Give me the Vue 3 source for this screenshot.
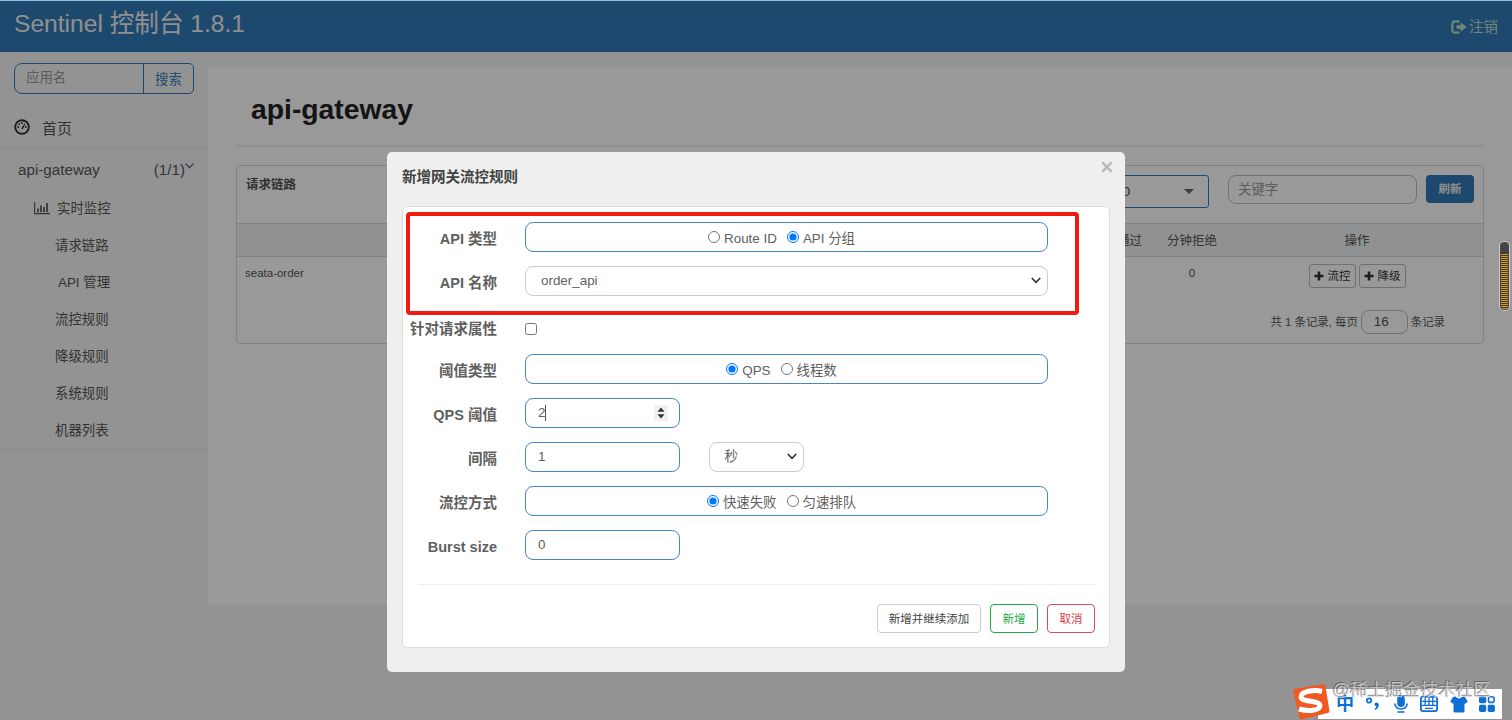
<template>
  <div class="page">
    <header class="navbar">
      <span class="brand">Sentinel 控制台 1.8.1</span>
      <a class="logout">
        <svg width="16" height="14" viewBox="0 0 16 14">
          <path d="M8.5 1.3H4Q1.3 1.3 1.3 4v6q0 2.7 2.7 2.7h4.5" fill="none" stroke="currentColor" stroke-width="2.2" />
          <path d="M5.5 5.2h4.2V2.3L15.6 7l-5.9 4.7V8.8H5.5z" fill="currentColor" />
        </svg>
        注销
      </a>
    </header>

    <div class="wrapper">
      <aside class="sidebar">
        <div class="search">
          <span class="search-input">应用名</span>
          <span class="search-btn">搜索</span>
        </div>
        <div class="home">
          <svg width="16" height="16" viewBox="0 0 16 16">
            <circle cx="8" cy="8" r="6.8" fill="none" stroke="currentColor" stroke-width="1.9" />
            <circle cx="4.2" cy="8" r=".9" fill="currentColor" />
            <circle cx="5.3" cy="5.2" r=".9" fill="currentColor" />
            <circle cx="8" cy="4" r=".9" fill="currentColor" />
            <circle cx="11.8" cy="8" r=".9" fill="currentColor" />
            <path d="M7.3 9.5l3.2-5 .8.5-2.4 5.2z" fill="currentColor" />
          </svg>
          <span>首页</span>
        </div>
        <div class="app">
          <span>api-gateway</span>
          <span class="count">(1/1)<svg width="9" height="6" viewBox="0 0 9 6"><path d="M.5 .7l4 4 4-4" fill="none" stroke="currentColor" stroke-width="1.2" /></svg></span>
        </div>
        <ul class="menu">
          <li v-for="item in menu" :key="item" :class="{ first: item === '实时监控', api: item === 'API 管理' }">
            <svg v-if="item === '实时监控'" width="16" height="13" viewBox="0 0 16 13">
              <path d="M.6 0v11.6H16" fill="none" stroke="currentColor" stroke-width="1.1" />
              <path d="M4 6.5v3.8M7 3.5v6.8M10 5v5.3M13 1v9.3" stroke="currentColor" stroke-width="1.7" />
            </svg>
            <span>{{ item }}</span>
          </li>
        </ul>
      </aside>

      <main class="content">
        <h1>api-gateway</h1>
        <section class="card">
          <div class="card-head">
            <span class="card-title">请求链路</span>
            <div class="machine">
              <span>192.168.1.7:8720</span>
              <i class="caret"></i>
            </div>
            <span class="keyword">关键字</span>
            <span class="refresh">刷新</span>
          </div>
          <div class="thead">
            <span class="col-pass">通过</span>
            <span class="col-block">分钟拒绝</span>
            <span class="col-op">操作</span>
          </div>
          <div class="trow">
            <span class="resource">seata-order</span>
            <span class="col-block">0</span>
            <div class="col-op">
              <span v-for="op in ['流控', '降级']" :key="op" class="op">
                <svg width="10" height="10" viewBox="0 0 10 10"><path d="M5 .5v9M.5 5h9" stroke="currentColor" stroke-width="2.6" /></svg>
                {{ op }}
              </span>
            </div>
          </div>
          <div class="pager">
            <span>共 1 条记录, 每页</span>
            <span class="size">16</span>
            <span>条记录</span>
          </div>
        </section>
      </main>
    </div>

    <div class="overlay"></div>
    <div class="topline"></div>

    <div class="dialog">
      <div class="dialog-head">
        <span>新增网关流控规则</span>
        <svg class="close" width="12" height="12" viewBox="0 0 12 12"><path d="M1.4 1.4l9.2 9.2M10.6 1.4l-9.2 9.2" stroke="#b5b5b5" stroke-width="2.3" /></svg>
      </div>
      <div class="panel">
        <div class="form">
          <div class="row">
            <label>API 类型</label>
            <div class="box wide radios">
              <input type="radio" name="mode" value="route" v-model="form.mode" /><span>Route ID</span>
              <input type="radio" name="mode" value="group" v-model="form.mode" /><span>API 分组</span>
            </div>
          </div>
          <div class="row">
            <label>API 名称</label>
            <div class="box wide select">
              <span>order_api</span>
              <svg width="10" height="7" viewBox="0 0 10 7"><path d="M.8 1l4.2 4.3L9.2 1" fill="none" stroke="#333" stroke-width="1.7" /></svg>
            </div>
          </div>
          <div class="row check">
            <label>针对请求属性</label>
            <input type="checkbox" v-model="form.attr" />
          </div>
          <div class="row">
            <label>阈值类型</label>
            <div class="box wide radios">
              <input type="radio" name="grade" value="qps" v-model="form.grade" /><span>QPS</span>
              <input type="radio" name="grade" value="thread" v-model="form.grade" /><span>线程数</span>
            </div>
          </div>
          <div class="row">
            <label>QPS 阈值</label>
            <div class="box number">
              <span class="focused">2</span>
              <svg class="spin" width="14" height="16" viewBox="0 0 14 16">
                <rect width="14" height="16" fill="#f1f1f1" />
                <path d="M7 2.500l3.600 4.200H3.400zM7 13.500l3.600-4.200H3.400z" fill="#333" />
              </svg>
            </div>
          </div>
          <div class="row">
            <label>间隔</label>
            <div class="box number">1</div>
            <div class="box select unit">
              <span>秒</span>
              <svg width="10" height="7" viewBox="0 0 10 7"><path d="M.8 1l4.2 4.3L9.2 1" fill="none" stroke="#333" stroke-width="1.7" /></svg>
            </div>
          </div>
          <div class="row">
            <label>流控方式</label>
            <div class="box wide radios">
              <input type="radio" name="behavior" value="fail" v-model="form.behavior" /><span>快速失败</span>
              <input type="radio" name="behavior" value="queue" v-model="form.behavior" /><span>匀速排队</span>
            </div>
          </div>
          <div class="row">
            <label>Burst size</label>
            <div class="box number">0</div>
          </div>
        </div>
        <div class="actions">
          <button class="more">新增并继续添加</button>
          <button class="add">新增</button>
          <button class="cancel">取消</button>
        </div>
      </div>
      <div class="highlight"></div>
    </div>

    <div class="gauge"></div>

    <div class="ime">
      <svg class="sogou" width="38" height="38" viewBox="0 0 38 38">
        <path d="M4 5.5L31 1.2q2-.3 2.4 1.6l4 24.7q.3 2-1.6 2.6L10 36.3q-2 .4-2.5-1.6L1.2 9Q.8 6 4 5.5z" fill="#f05a22" />
        <path d="M30 8.500C22 6 8.500 8.500 9 14.300c.5 5.200 19 2.500 19 8.200 0 5.500-12.500 6-21 3.500" fill="none" stroke="#fff" stroke-width="5" />
      </svg>
      <div class="tools">
        <span class="zh">中</span>
        <svg width="16" height="18" viewBox="0 0 16 18">
          <circle cx="4" cy="5.5" r="2.2" fill="none" stroke="#0b6fd6" stroke-width="1.7" />
          <path d="M9.500 9.200q0-1.800 2-1.800 2.300 0 2.300 2.500 0 3-3.500 5l-.7-1q1.800-1.200 1.800-2.600-1.900-.3-1.900-2.100z" fill="#0b6fd6" />
        </svg>
        <svg width="16" height="20" viewBox="0 0 16 20">
          <rect x="4.200" y="1" width="7.600" height="12" rx="3.800" fill="#0b6fd6" />
          <path d="M1.800 9.500q.7 5.500 6.200 5.500t6.200-5.500M4.500 18h7" fill="none" stroke="#0b6fd6" stroke-width="1.700" />
        </svg>
        <svg width="18" height="16" viewBox="0 0 18 16">
          <rect x=".9" y=".9" width="16.200" height="14.200" rx="2" fill="none" stroke="#0b6fd6" stroke-width="1.800" />
          <path d="M2 5.300h14M2 9.300h14M5.200 1v8.300M9 1v8.300M12.800 1v8.300M5 12.400h8" stroke="#0b6fd6" stroke-width="1.300" />
        </svg>
        <svg width="18" height="17" viewBox="0 0 18 17">
          <path d="M5.500.5Q9 4.500 12.500.5L15 1l2.800 4.800-3.300 2.200v7q0 1.500-1.500 1.500H5q-1.500 0-1.500-1.500V8L.2 5.800 3 1z" fill="#0b6fd6" />
        </svg>
        <svg width="16" height="16" viewBox="0 0 16 16">
          <rect width="7.200" height="7.200" rx="1.800" fill="#0b6fd6" />
          <rect x="9.500" y=".8" width="5.600" height="5.600" rx="2" fill="none" stroke="#0b6fd6" stroke-width="1.600" />
          <rect y="8.800" width="7.200" height="7.200" rx="1.800" fill="#0b6fd6" />
          <rect x="8.700" y="8.800" width="7.200" height="7.200" rx="1.800" fill="#0b6fd6" />
        </svg>
      </div>
    </div>
    <div class="watermark">@稀土掘金技术社区</div>
  </div>
</template>

<script setup>
import { reactive } from 'vue'

const menu = ['实时监控', '请求链路', 'API 管理', '流控规则', '降级规则', '系统规则', '机器列表']

const form = reactive({
  mode: 'group',
  attr: false,
  grade: 'qps',
  behavior: 'fail'
})
</script>

<style>
body {
  margin: 0;
  overflow: hidden;
}
</style>

<style scoped>
.page {
  position: relative;
  width: 1512px;
  height: 720px;
  overflow: hidden;
  background: #f6f6f6;
  color: #555;
  font-family: "Liberation Sans", "Noto Sans CJK SC", sans-serif;
  font-size: 13.4px;
  line-height: 20px;
  white-space: nowrap;
}

.page * {
  box-sizing: border-box;
}

svg {
  display: block;
  flex: none;
}

.navbar {
  display: flex;
  justify-content: space-between;
  height: 52px;
  padding: 0 14px;
  background: #337ab7;
}

.brand {
  font-size: 24.6px;
  line-height: 48px;
  color: #f0f0f0;
}

.logout {
  display: flex;
  align-items: center;
  gap: 2px;
  padding-top: 2px;
  font-size: 14.5px;
  color: #b9dfc4;
}

.wrapper {
  display: flex;
  height: 668px;
}

.sidebar {
  width: 208px;
  padding-top: 11px;
}

.search {
  display: flex;
  width: 180px;
  height: 31px;
  margin-left: 14px;
  border: 1px solid #337ab7;
  border-radius: 8px 5px 5px 8px;
}

.search-input {
  width: 129px;
  padding-left: 11px;
  line-height: 28px;
  color: #999;
  border-right: 1px solid #337ab7;
}

.search-btn {
  flex: 1;
  text-align: center;
  line-height: 31px;
  color: #337ab7;
}

.home {
  display: flex;
  align-items: center;
  gap: 12px;
  height: 55px;
  padding: 15px 0 0 14px;
  font-size: 15px;
  border-bottom: 1px solid #e4e4e4;
}

.home svg {
  margin-top: -3px;
  color: #333;
}

.app {
  display: flex;
  justify-content: space-between;
  height: 40px;
  padding: 0 14px 0 18px;
  font-size: 15.2px;
  line-height: 41px;
}

.count {
  display: flex;
}

.count svg {
  margin-top: 14px;
}

.menu {
  height: 261px;
  margin: 0;
  padding: 1px 0 0;
  list-style: none;
  border-bottom: 1px solid #e4e4e4;
}

.menu li {
  display: flex;
  align-items: center;
  height: 37px;
  padding-left: 55px;
}

.menu .first {
  gap: 7px;
  padding-left: 34px;
}

.menu .api {
  padding-left: 58px;
}

.content {
  width: 1304px;
  height: 538px;
  margin-top: 15px;
  padding: 0 28px;
  background: #fff;
}

h1 {
  height: 80px;
  margin: 0 0 18px;
  padding-left: 15px;
  font-size: 28.3px;
  line-height: 84px;
  color: #222;
  border-bottom: 2px solid #eee;
}

.card {
  width: 1248px;
  height: 179px;
  border: 1px solid #d8d8d8;
  border-radius: 5px;
}

.card-head {
  display: flex;
  align-items: flex-start;
  height: 57px;
  padding: 9px 9px 0;
}

.card-title {
  flex: 1;
  font-size: 12.5px;
  font-weight: bold;
}

.machine {
  display: flex;
  justify-content: space-between;
  align-items: center;
  width: 192px;
  height: 33px;
  margin-right: 19px;
  padding: 0 14px 0 8px;
  color: #444;
  border: 1px solid #337ab7;
  border-radius: 3px;
}

.caret {
  border: 5px solid transparent;
  border-top-color: #666;
  border-bottom: 0;
}

.keyword {
  width: 189px;
  height: 29px;
  margin-right: 9px;
  padding-left: 9px;
  line-height: 27px;
  color: #999;
  border: 1px solid #bbb;
  border-radius: 8px;
}

.refresh {
  width: 48px;
  height: 28px;
  text-align: center;
  font-size: 11.5px;
  font-weight: bold;
  line-height: 28px;
  color: #eee;
  background: #337ab7;
  border-radius: 4px;
}

.thead {
  display: flex;
  justify-content: flex-end;
  height: 34px;
  font-size: 12.5px;
  line-height: 34px;
  background: #eef2f4;
  border: solid #d8d8d8;
  border-width: 1px 0;
}

.col-pass {
  width: 50px;
  text-align: right;
}

.col-block {
  width: 100px;
  margin-right: 4px;
  text-align: center;
}

.col-op {
  width: 222px;
  margin-right: 15px;
  text-align: center;
}

.trow {
  display: flex;
  height: 48px;
  padding-left: 8px;
  font-size: 11.5px;
  line-height: 32px;
}

.resource {
  flex: 1;
}

.trow .col-op {
  display: flex;
  justify-content: center;
  gap: 3px;
  padding-top: 7px;
}

.op {
  display: flex;
  align-items: center;
  justify-content: center;
  gap: 4px;
  width: 47px;
  height: 24px;
  line-height: 20px;
  color: #333;
  border: 1px solid #bbb;
  border-radius: 3px;
}

.pager {
  display: flex;
  align-items: center;
  justify-content: flex-end;
  gap: 3px;
  height: 34px;
  padding-right: 38px;
  font-size: 11.4px;
}

.size {
  width: 47px;
  height: 24px;
  padding-left: 12px;
  font-size: 13.5px;
  line-height: 22px;
  border: 1px solid #bbb;
  border-radius: 8px;
}

.overlay {
  position: absolute;
  inset: 0;
  background: rgba(0, 0, 0, 0.4);
}

.topline {
  position: absolute;
  top: 0;
  left: 0;
  width: 100%;
  height: 1px;
  background: #8dc3dc;
}

.dialog {
  position: absolute;
  left: 387px;
  top: 152px;
  width: 738px;
  height: 520px;
  padding: 0 15px;
  background: #efefef;
  border-radius: 5px;
  color: #606060;
}

.dialog-head {
  display: flex;
  justify-content: space-between;
  height: 54px;
  font-size: 14.5px;
  font-weight: bold;
  line-height: 50px;
  color: #444;
}

.close {
  margin: 9px -3px 0 0;
}

.panel {
  height: 442px;
  padding: 14.5px 14px 0 15px;
  background: #fff;
  border: 1px solid #ddd;
  border-radius: 5px;
}

.form {
  display: flex;
  flex-direction: column;
  gap: 13.500px;
  height: 363.500px;
  border-bottom: 1px solid #eee;
}

.row {
  display: flex;
  height: 30.500px;
}

.row label {
  width: 94px;
  margin: 0 28px 0 -15px;
  text-align: right;
  font-size: 14.5px;
  font-weight: bold;
  line-height: 35px;
}

.check label {
  line-height: 38px;
}

.check input {
  width: 12px;
  height: 12px;
  margin: 13px 0 0;
}

.box {
  height: 30.500px;
  border: 1px solid #4a86c0;
  border-radius: 8px;
}

.wide {
  width: 523px;
}

.number {
  display: flex;
  justify-content: space-between;
  align-items: flex-start;
  width: 155px;
  padding: 0 11px 0 12px;
  line-height: 28px;
}

.focused {
  height: 16px;
  margin-top: 6px;
  line-height: 16px;
  border-right: 1px solid #555;
}

.spin {
  margin-top: 6px;
}

.select {
  display: flex;
  align-items: center;
  justify-content: space-between;
  padding: 0 6px 0 15px;
  border-color: #ccc;
}

.unit {
  width: 95px;
  margin-left: 28.500px;
}

.radios {
  display: flex;
  align-items: center;
  justify-content: center;
}

.radios input {
  width: 12px;
  height: 12px;
  margin: 0 4px 0 0;
}

.radios span {
  padding-top: 4px;
  margin-right: 10px;
}

.actions {
  display: flex;
  justify-content: flex-end;
  gap: 9px;
  padding-top: 19px;
}

button {
  width: 48px;
  height: 29px;
  padding: 0 0 2px;
  font-family: inherit;
  font-size: 11.5px;
  background: #fff;
  border: 1px solid #ccc;
  border-radius: 4px;
  color: #444;
}

.more {
  width: 104px;
}

.add {
  color: #28a745;
  border-color: #28a745;
}

.cancel {
  color: #dc3545;
  border-color: #dc4a62;
}

.highlight {
  position: absolute;
  left: 19px;
  top: 60px;
  width: 673px;
  height: 103px;
  border: 4px solid #f21b10;
  border-radius: 4px;
}

.gauge {
  position: absolute;
  left: 1499px;
  top: 241px;
  width: 11px;
  height: 70px;
  border: 1px solid #ccc;
  border-radius: 5px;
  background:
    linear-gradient(#444 11px, transparent 11px),
    repeating-linear-gradient(#d09a3a 0 1px, #4a3a20 1px 2px);
  box-shadow: inset 0 0 0 1px #444;
}

.ime {
  position: absolute;
  left: 1292px;
  top: 683px;
  display: flex;
}

.sogou {
  position: relative;
  z-index: 1;
}

.tools {
  display: flex;
  align-items: center;
  justify-content: space-between;
  width: 184px;
  height: 30px;
  margin: 6px 0 0 -12px;
  padding: 0 7px 0 18px;
  background: #fff;
}

.zh {
  font-size: 18px;
  font-weight: bold;
  color: #0b6fd6;
}

.watermark {
  position: absolute;
  right: 21px;
  top: 678px;
  font-size: 17.6px;
  line-height: 24px;
  color: rgba(215, 215, 215, 0.75);
  text-shadow: -1px -1px 0 rgba(70, 70, 70, 0.6);
}
</style>
